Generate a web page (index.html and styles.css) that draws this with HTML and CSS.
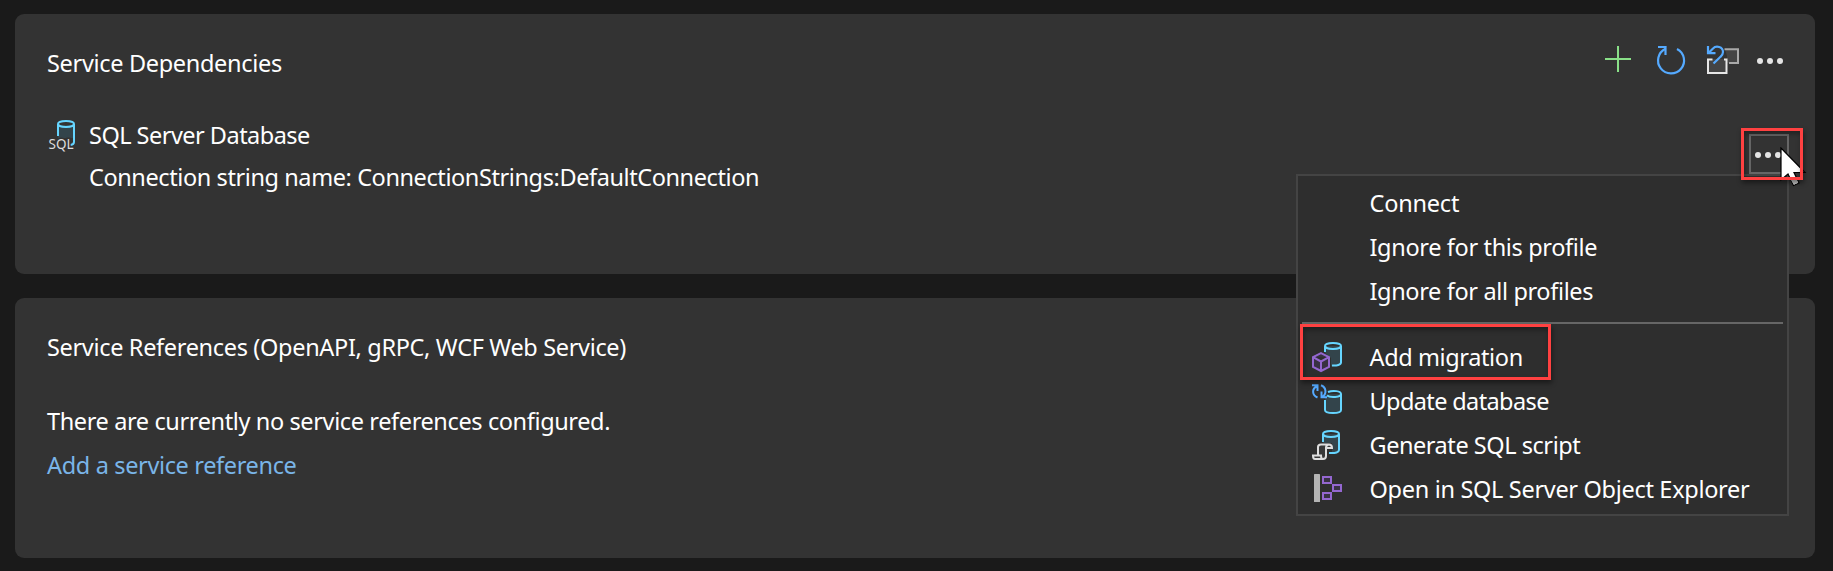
FILE: index.html
```html
<!DOCTYPE html>
<html lang="en">
<head>
<meta charset="utf-8">
<title>Connected Services</title>
<link rel="stylesheet" href="styles.css">
</head>
<body>
<main class="page">
  <section class="card">
    <header class="card-head">
      <h2 class="title t-deps">Service Dependencies</h2>
      <div class="toolbar">
        <svg class="tool" viewBox="0 0 32 32"><path d="M15 2V28M2 15H28" stroke="#89e088" stroke-width="2"/></svg>
        <svg class="tool" viewBox="0 0 32 32" fill="none" stroke="#55aaff" stroke-width="2.200"><path d="M22 4.9A13 13 0 1 1 10.5 4.7"/><path d="M3 3H10.5V11"/></svg>
        <svg class="tool" viewBox="0 0 32 32" fill="none" stroke-width="2">
          <path d="M18 5.2H30.5V19H20V12Z" fill="#444" stroke="none"/>
          <path d="M17.500 5.200H31V19H22" stroke="#a9a9a9"/>
          <path d="M1 15H19V29H1Z" fill="#444" stroke="none"/>
          <path d="M5.500 15.500H1V29H19.500V15.500H17" stroke="#e6e6e6"/>
          <path d="M1 2V9.200H8.500M1.500 9L6 4.500C9 1.300 16 2.500 16 8C16 10 15 11.500 13.500 12.800L6.500 19.500" stroke="#55aaff" stroke-width="2.200"/>
        </svg>
        <svg class="tool" viewBox="0 0 32 32" fill="#e4e4e4"><circle cx="1" cy="17" r="3"/><circle cx="11" cy="17" r="3"/><circle cx="21" cy="17" r="3"/></svg>
      </div>
    </header>
    <div class="dependency">
      <svg class="dep-icon" viewBox="0 0 32 32">
        <path d="M11 7V20H27V7Z" fill="#33444b"/>
        <g fill="none" stroke="#66d5ff" stroke-width="2"><ellipse cx="19" cy="6" rx="8" ry="3"/><path d="M11 6V18M27 6V24C27 26 25.500 26.700 23.500 27"/></g>
        <text class="sql" x="1.500" y="30.500" textLength="25" lengthAdjust="spacingAndGlyphs">SQL</text>
      </svg>
      <div class="dep-text">
        <div class="t-sql">SQL Server Database</div>
        <div class="t-conn">Connection string name: ConnectionStrings:DefaultConnection</div>
      </div>
    </div>
  </section>

  <section class="card">
    <h2 class="title t-refs">Service References (OpenAPI, gRPC, WCF Web Service)</h2>
    <div class="references">
      <div class="t-none">There are currently no service references configured.</div>
      <a class="link">Add a service reference</a>
    </div>
  </section>

  <div class="more">
    <svg class="dots" viewBox="0 0 36 36" fill="#e4e4e4"><circle cx="7" cy="19" r="3"/><circle cx="17" cy="19" r="3"/><circle cx="27" cy="19" r="3"/></svg>
  </div>

  <nav class="menu">
    <div class="item"><span class="glyph"></span><span class="m-connect">Connect</span></div>
    <div class="item"><span class="glyph"></span><span class="m-ignore">Ignore for this profile</span></div>
    <div class="item"><span class="glyph"></span><span class="m-ignore-all">Ignore for all profiles</span></div>
    <div class="separator"></div>
    <div class="item">
      <svg class="glyph" viewBox="0 0 34 32" fill="none" stroke-width="2">
        <path d="M15 5V12L21 17V25C27 26 31 24 31 22V5Z" fill="#33444b"/>
        <path d="M15 11V5M31 5V21.500C31 23.500 27 25 22 24.500" stroke="#66d5ff"/><ellipse cx="23" cy="5" rx="8" ry="3" stroke="#66d5ff"/>
        <path d="M11 12.200L19 16.200V25.800L11 30L3 25.800V16.200ZM3 16.200L11 20.500L19 16.200M11 20.500V30" fill="#383143" stroke="#9467d0"/>
      </svg>
      <span class="m-add">Add migration</span>
    </div>
    <div class="item">
      <svg class="glyph" viewBox="0 0 34 32" fill="none" stroke-width="2">
        <path d="M15 9V26C18 29 28 29 31 26V9Z" fill="#33444b"/>
        <path d="M15 15V25C15 29 31 29 31 25V9M18 7C23 5 31 6 31 9C31 12.500 20 13 17 10.500" stroke="#66d5ff"/>
        <path d="M2 .3H7.500V6M7 1C1.500 4 2 10 7.500 12.500M17 12.200H11.500V6.500M12 12C17 9 16.500 2.500 11 .3" stroke="#55aaff"/>
      </svg>
      <span class="m-update">Update database</span>
    </div>
    <div class="item">
      <svg class="glyph" viewBox="0 0 34 32" fill="none" stroke-width="2">
        <path d="M13 5V14H22V23C26 24 29 23 29 22V5Z" fill="#33444b"/>
        <path d="M13 13V5M29 5V21C29 23 26 24.500 19 24" stroke="#66d5ff"/><ellipse cx="21" cy="5" rx="8" ry="3" stroke="#66d5ff"/>
        <path d="M8 26V18C8 16 9 15.500 11 15.500H19C21 15.500 22 16.500 22 19H16V27C16 29 15 30 13 30H5C3.500 30 3 29 3 26.500H11C11 29 11.500 30 13 30M16 19C16 17 17 15.500 19 15.500" fill="#383838" stroke="#dedede"/>
      </svg>
      <span class="m-script">Generate SQL script</span>
    </div>
    <div class="item">
      <svg class="glyph" viewBox="0 0 34 32" fill="#383143" stroke="#9467d0" stroke-width="2">
        <rect x="4" y="1" width="6" height="28" rx=".5" fill="#b4b4b4" stroke="none"/>
        <rect x="13" y="4" width="8" height="6"/><rect x="23" y="12" width="8" height="6"/><rect x="13" y="20" width="8" height="6"/>
      </svg>
      <span class="m-open">Open in SQL Server Object Explorer</span>
    </div>
    <div class="callout callout-item"></div>
  </nav>

  <svg class="cursor" viewBox="0 0 28 40"><path d="M1 1V33L8 27L13.500 38.500L19 36L14 25.500H25Z" fill="#fff" stroke="#000" stroke-width="1.200"/><path d="M11 33L13.800 37.700L18.200 35.700L16.500 32Z" fill="#ccc"/></svg>
  <div class="callout callout-more"></div>
</main>
</body>
</html>
```
FILE: styles.css
```css
* { box-sizing: border-box; }

body {
  margin: 0;
  background: #1a1a1a;
  color: #fff;
  font: 23.5px/44px "Noto Sans", "Open Sans", sans-serif;
  white-space: nowrap;
}

.page {
  position: relative;
  display: flex;
  flex-direction: column;
  gap: 24px;
  width: 1833px;
  height: 571px;
  padding: 14px 18px 13px 15px;
  overflow: hidden;
}

.card {
  height: 260px;
  padding: 27px 24px 0 32px;
  background: #333;
  border-radius: 9px;
}

.card-head {
  display: flex;
  justify-content: space-between;
}

.title {
  margin: 0;
  font-size: inherit;
  font-weight: 400;
}

.toolbar {
  display: flex;
  gap: 20px;
  padding-top: 3px;
}

.tool {
  width: 32px;
  height: 32px;
  overflow: visible;
}

.dependency {
  display: flex;
  gap: 10px;
  margin-top: 29px;
  line-height: 42px;
}

.dep-icon {
  width: 32px;
  height: 32px;
  margin-top: 4px;
  overflow: visible;
}

.sql {
  fill: #ddd;
  stroke: #333;
  stroke-width: 3px;
  paint-order: stroke;
  font-size: 14px;
}

.references { margin-top: 30px; }
.link { color: #7ab5e8; letter-spacing: -.35px; }

.t-deps { letter-spacing: -.32px; }
.t-sql { letter-spacing: -.52px; }
.t-conn { letter-spacing: -.41px; }
.t-refs { letter-spacing: -.33px; }
.t-none { letter-spacing: -.38px; }

.more {
  position: absolute;
  left: 1749px;
  top: 134px;
  width: 40px;
  height: 40px;
  border: 2px solid #666;
}

.dots { display: block; width: 36px; height: 36px; }

.menu {
  position: absolute;
  left: 1296px;
  top: 174px;
  width: 493px;
  height: 342px;
  padding: 5px 4px 3px;
  background: #2e2e2e;
  border: 2px solid #444;
}

.item {
  display: flex;
  align-items: center;
  gap: 25.500px;
  height: 44px;
  padding-left: 8px;
}

.glyph { width: 34px; height: 32px; overflow: visible; }

.separator {
  height: 2px;
  margin: 9px 0 11px;
  background: #666;
}

.m-connect { letter-spacing: -.2px; }
.m-ignore { letter-spacing: -.35px; }
.m-ignore-all { letter-spacing: -.36px; }
.m-add { letter-spacing: -.38px; }
.m-update { letter-spacing: -.62px; }
.m-script { letter-spacing: -.45px; }
.m-open { letter-spacing: -.31px; }

.callout {
  position: absolute;
  border: 3px solid #ff4141;
  box-shadow: 1px 3px 5px rgba(0, 0, 0, .45), inset 1px 3px 5px rgba(0, 0, 0, .35);
}

.callout-item { left: 2px; top: 148px; width: 251px; height: 56px; }
.callout-more { left: 1741px; top: 128px; width: 62px; height: 52px; }

.cursor {
  position: absolute;
  left: 1780px;
  top: 147px;
  width: 28px;
  height: 40px;
}
```
